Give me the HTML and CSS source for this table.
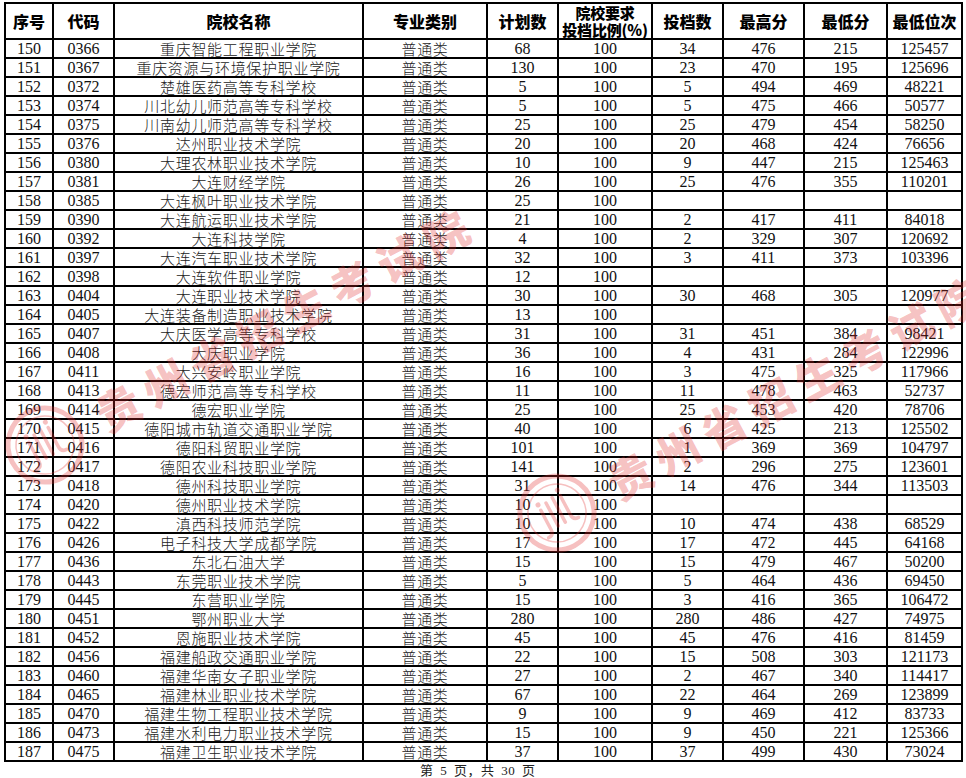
FILE: index.html
```html
<!DOCTYPE html>
<html lang="zh-CN">
<head>
<meta charset="utf-8">
<title>院校投档情况</title>
<link rel="stylesheet" href="styles.css">
</head>
<body>
<div class="page">
<table class="grid">
<colgroup>
<col class="w-no"><col class="w-code"><col class="w-name"><col class="w-type"><col class="w-plan"><col class="w-ratio"><col class="w-adm"><col class="w-max"><col class="w-min"><col class="w-rank">
</colgroup>
<thead>
<tr><th>序号</th><th>代码</th><th>院校名称</th><th>专业类别</th><th>计划数</th><th class="two">院校要求<br>投档比例(%)</th><th>投档数</th><th>最高分</th><th>最低分</th><th>最低位次</th></tr>
</thead>
<tbody>
<tr><td>150</td><td>0366</td><td class="zh">重庆智能工程职业学院</td><td class="zh">普通类</td><td>68</td><td>100</td><td>34</td><td>476</td><td>215</td><td>125457</td></tr>
<tr><td>151</td><td>0367</td><td class="zh">重庆资源与环境保护职业学院</td><td class="zh">普通类</td><td>130</td><td>100</td><td>23</td><td>470</td><td>195</td><td>125696</td></tr>
<tr><td>152</td><td>0372</td><td class="zh">楚雄医药高等专科学校</td><td class="zh">普通类</td><td>5</td><td>100</td><td>5</td><td>494</td><td>469</td><td>48221</td></tr>
<tr><td>153</td><td>0374</td><td class="zh">川北幼儿师范高等专科学校</td><td class="zh">普通类</td><td>5</td><td>100</td><td>5</td><td>475</td><td>466</td><td>50577</td></tr>
<tr><td>154</td><td>0375</td><td class="zh">川南幼儿师范高等专科学校</td><td class="zh">普通类</td><td>25</td><td>100</td><td>25</td><td>479</td><td>454</td><td>58250</td></tr>
<tr><td>155</td><td>0376</td><td class="zh">达州职业技术学院</td><td class="zh">普通类</td><td>20</td><td>100</td><td>20</td><td>468</td><td>424</td><td>76656</td></tr>
<tr><td>156</td><td>0380</td><td class="zh">大理农林职业技术学院</td><td class="zh">普通类</td><td>10</td><td>100</td><td>9</td><td>447</td><td>215</td><td>125463</td></tr>
<tr><td>157</td><td>0381</td><td class="zh">大连财经学院</td><td class="zh">普通类</td><td>26</td><td>100</td><td>25</td><td>476</td><td>355</td><td>110201</td></tr>
<tr><td>158</td><td>0385</td><td class="zh">大连枫叶职业技术学院</td><td class="zh">普通类</td><td>25</td><td>100</td><td></td><td></td><td></td><td></td></tr>
<tr><td>159</td><td>0390</td><td class="zh">大连航运职业技术学院</td><td class="zh">普通类</td><td>21</td><td>100</td><td>2</td><td>417</td><td>411</td><td>84018</td></tr>
<tr><td>160</td><td>0392</td><td class="zh">大连科技学院</td><td class="zh">普通类</td><td>4</td><td>100</td><td>2</td><td>329</td><td>307</td><td>120692</td></tr>
<tr><td>161</td><td>0397</td><td class="zh">大连汽车职业技术学院</td><td class="zh">普通类</td><td>32</td><td>100</td><td>3</td><td>411</td><td>373</td><td>103396</td></tr>
<tr><td>162</td><td>0398</td><td class="zh">大连软件职业学院</td><td class="zh">普通类</td><td>12</td><td>100</td><td></td><td></td><td></td><td></td></tr>
<tr><td>163</td><td>0404</td><td class="zh">大连职业技术学院</td><td class="zh">普通类</td><td>30</td><td>100</td><td>30</td><td>468</td><td>305</td><td>120977</td></tr>
<tr><td>164</td><td>0405</td><td class="zh">大连装备制造职业技术学院</td><td class="zh">普通类</td><td>13</td><td>100</td><td></td><td></td><td></td><td></td></tr>
<tr><td>165</td><td>0407</td><td class="zh">大庆医学高等专科学校</td><td class="zh">普通类</td><td>31</td><td>100</td><td>31</td><td>451</td><td>384</td><td>98421</td></tr>
<tr><td>166</td><td>0408</td><td class="zh">大庆职业学院</td><td class="zh">普通类</td><td>36</td><td>100</td><td>4</td><td>431</td><td>284</td><td>122996</td></tr>
<tr><td>167</td><td>0411</td><td class="zh">大兴安岭职业学院</td><td class="zh">普通类</td><td>16</td><td>100</td><td>3</td><td>475</td><td>325</td><td>117966</td></tr>
<tr><td>168</td><td>0413</td><td class="zh">德宏师范高等专科学校</td><td class="zh">普通类</td><td>11</td><td>100</td><td>11</td><td>478</td><td>463</td><td>52737</td></tr>
<tr><td>169</td><td>0414</td><td class="zh">德宏职业学院</td><td class="zh">普通类</td><td>25</td><td>100</td><td>25</td><td>453</td><td>420</td><td>78706</td></tr>
<tr><td>170</td><td>0415</td><td class="zh">德阳城市轨道交通职业学院</td><td class="zh">普通类</td><td>40</td><td>100</td><td>6</td><td>425</td><td>213</td><td>125502</td></tr>
<tr><td>171</td><td>0416</td><td class="zh">德阳科贸职业学院</td><td class="zh">普通类</td><td>101</td><td>100</td><td>1</td><td>369</td><td>369</td><td>104797</td></tr>
<tr><td>172</td><td>0417</td><td class="zh">德阳农业科技职业学院</td><td class="zh">普通类</td><td>141</td><td>100</td><td>2</td><td>296</td><td>275</td><td>123601</td></tr>
<tr><td>173</td><td>0418</td><td class="zh">德州科技职业学院</td><td class="zh">普通类</td><td>31</td><td>100</td><td>14</td><td>476</td><td>344</td><td>113503</td></tr>
<tr><td>174</td><td>0420</td><td class="zh">德州职业技术学院</td><td class="zh">普通类</td><td>10</td><td>100</td><td></td><td></td><td></td><td></td></tr>
<tr><td>175</td><td>0422</td><td class="zh">滇西科技师范学院</td><td class="zh">普通类</td><td>10</td><td>100</td><td>10</td><td>474</td><td>438</td><td>68529</td></tr>
<tr><td>176</td><td>0426</td><td class="zh">电子科技大学成都学院</td><td class="zh">普通类</td><td>17</td><td>100</td><td>17</td><td>472</td><td>445</td><td>64168</td></tr>
<tr><td>177</td><td>0436</td><td class="zh">东北石油大学</td><td class="zh">普通类</td><td>15</td><td>100</td><td>15</td><td>479</td><td>467</td><td>50200</td></tr>
<tr><td>178</td><td>0443</td><td class="zh">东莞职业技术学院</td><td class="zh">普通类</td><td>5</td><td>100</td><td>5</td><td>464</td><td>436</td><td>69450</td></tr>
<tr><td>179</td><td>0445</td><td class="zh">东营职业学院</td><td class="zh">普通类</td><td>15</td><td>100</td><td>3</td><td>416</td><td>365</td><td>106472</td></tr>
<tr><td>180</td><td>0451</td><td class="zh">鄂州职业大学</td><td class="zh">普通类</td><td>280</td><td>100</td><td>280</td><td>486</td><td>427</td><td>74975</td></tr>
<tr><td>181</td><td>0452</td><td class="zh">恩施职业技术学院</td><td class="zh">普通类</td><td>45</td><td>100</td><td>45</td><td>476</td><td>416</td><td>81459</td></tr>
<tr><td>182</td><td>0456</td><td class="zh">福建船政交通职业学院</td><td class="zh">普通类</td><td>22</td><td>100</td><td>15</td><td>508</td><td>303</td><td>121173</td></tr>
<tr><td>183</td><td>0460</td><td class="zh">福建华南女子职业学院</td><td class="zh">普通类</td><td>27</td><td>100</td><td>2</td><td>467</td><td>340</td><td>114417</td></tr>
<tr><td>184</td><td>0465</td><td class="zh">福建林业职业技术学院</td><td class="zh">普通类</td><td>67</td><td>100</td><td>22</td><td>464</td><td>269</td><td>123899</td></tr>
<tr><td>185</td><td>0470</td><td class="zh">福建生物工程职业技术学院</td><td class="zh">普通类</td><td>9</td><td>100</td><td>9</td><td>469</td><td>412</td><td>83733</td></tr>
<tr><td>186</td><td>0473</td><td class="zh">福建水利电力职业技术学院</td><td class="zh">普通类</td><td>15</td><td>100</td><td>9</td><td>450</td><td>221</td><td>125366</td></tr>
<tr><td>187</td><td>0475</td><td class="zh">福建卫生职业技术学院</td><td class="zh">普通类</td><td>37</td><td>100</td><td>37</td><td>499</td><td>430</td><td>73024</td></tr>
</tbody>
</table>
<div class="footer">第 5 页，共 30 页</div>

<div class="wm wm-a">
  <svg class="wm-logo" viewBox="0 0 80 80" aria-hidden="true">
    <circle cx="40" cy="40" r="37" fill="none" stroke="currentColor" stroke-width="5"/>
    <circle cx="40" cy="40" r="29" fill="none" stroke="currentColor" stroke-width="1.5"/>
    <path d="M27 30 v22 q0 6 -6 6 M35 26 v26 M43 24 v28 M51 26 v22 q0 6 6 6" fill="none" stroke="currentColor" stroke-width="3.5" stroke-linecap="round"/>
    <circle cx="27" cy="24" r="2.5" fill="currentColor"/>
    <circle cx="51" cy="20" r="2.5" fill="currentColor"/>
  </svg>
  <span class="wm-text">贵州省招生考试院</span>
</div>
<div class="wm wm-b">
  <svg class="wm-logo" viewBox="0 0 80 80" aria-hidden="true">
    <circle cx="40" cy="40" r="37" fill="none" stroke="currentColor" stroke-width="5"/>
    <circle cx="40" cy="40" r="29" fill="none" stroke="currentColor" stroke-width="1.5"/>
    <path d="M27 30 v22 q0 6 -6 6 M35 26 v26 M43 24 v28 M51 26 v22 q0 6 6 6" fill="none" stroke="currentColor" stroke-width="3.5" stroke-linecap="round"/>
    <circle cx="27" cy="24" r="2.5" fill="currentColor"/>
    <circle cx="51" cy="20" r="2.5" fill="currentColor"/>
  </svg>
  <span class="wm-text">贵州省招生考试院</span>
</div>
</div>
</body>
</html>
```
FILE: styles.css
```css
html, body {
  margin: 0;
  padding: 0;
  background: #ffffff;
}

.page {
  position: relative;
  width: 966px;
  height: 778px;
  overflow: hidden;
  padding: 2px 0 0 4px;
  box-sizing: border-box;
}

.grid {
  border-collapse: collapse;
  table-layout: fixed;
  width: 959px;
  color: #111;
}

.w-no { width: 48px; }
.w-code { width: 61px; }
.w-name { width: 249px; }
.w-type { width: 124px; }
.w-plan { width: 71px; }
.w-ratio { width: 94px; }
.w-adm { width: 71px; }
.w-max { width: 81px; }
.w-min { width: 83px; }
.w-rank { width: 75px; }

.grid th,
.grid td {
  border: 2px solid #000;
  padding: 0;
  text-align: center;
  white-space: nowrap;
  overflow: visible;
}

.grid th {
  height: 34px;
  font-family: "Noto Sans CJK SC", "Noto Sans", sans-serif;
  font-weight: 900;
  font-size: 16px;
  line-height: 18px;
  color: #000;
}

.grid th.two {
  font-size: 15px;
  line-height: 17px;
  letter-spacing: -0.2px;
  height: 34px;
}

.grid td {
  height: 17px;
  font-family: "Liberation Serif", "Noto Sans CJK SC", serif;
  font-size: 16px;
  line-height: 17px;
  padding-top: 0;
  vertical-align: bottom;
}

.grid td.zh {
  font-family: "Noto Sans CJK SC", "Liberation Serif", sans-serif;
  font-weight: 300;
  font-size: 15px;
  letter-spacing: 0.7px;
  line-height: 17px;
  color: #222;
}

.footer {
  margin: 1px 0 0 416px;
  font-family: "Liberation Serif", "Noto Sans CJK SC", serif;
  font-size: 13px;
  line-height: 15px;
  word-spacing: 3px;
  letter-spacing: 0.5px;
  color: #222;
}

.wm {
  position: absolute;
  display: flex;
  align-items: center;
  gap: 20px;
  color: rgba(225, 45, 45, 0.3);
  transform-origin: 40px 40px;
  pointer-events: none;
}

.wm-a {
  left: 5px;
  top: 405px;
  transform: rotate(-28deg);
}

.wm-b {
  left: 517px;
  top: 473px;
  transform: rotate(-28deg);
}

.wm-logo {
  width: 80px;
  height: 80px;
  flex: none;
}

.wm-text {
  font-family: "Noto Sans CJK SC", sans-serif;
  font-weight: 900;
  font-size: 44px;
  letter-spacing: 9px;
  white-space: nowrap;
  line-height: 1;
}
```
